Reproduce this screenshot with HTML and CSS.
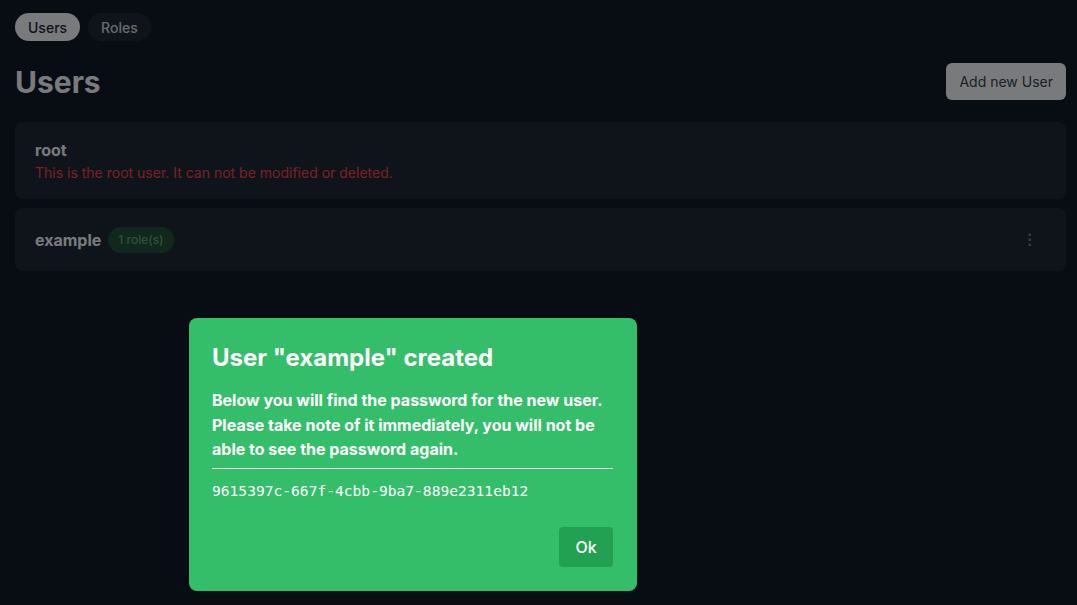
FILE: index.html
```html
<!DOCTYPE html>
<html lang="en">

<head>
    <meta charset="UTF-8">
    <meta name="viewport" content="width=device-width, initial-scale=1.0">
    <title>Users</title>
    <link rel="stylesheet" href="styles.css">
</head>

<body>
    <div class="page">
        <nav class="tabs">
            <a class="tab active" href="#">Users</a>
            <a class="tab" href="#">Roles</a>
        </nav>

        <header class="header">
            <h1>Users</h1>
            <button class="btn">Add new User</button>
        </header>

        <div class="user-list">
            <div class="user-card root">
                <div class="user-name">root</div>
                <div class="user-note">This is the root user. It can not be modified or deleted.</div>
            </div>

            <div class="user-card">
                <div class="user-row">
                    <span class="user-name">example</span>
                    <span class="badge">1 role(s)</span>
                </div>
                <button class="menu" aria-label="More">
                    <svg width="4" height="14" viewBox="0 0 4 14">
                        <rect x="0.5" y="0.5" width="2.5" height="2.5" fill="currentColor" />
                        <rect x="0.5" y="5.5" width="2.5" height="2.5" fill="currentColor" />
                        <rect x="0.5" y="10.5" width="2.5" height="2.5" fill="currentColor" />
                    </svg>
                </button>
            </div>
        </div>
    </div>

    <!-- Modal shown once a user was created -->
    <div class="backdrop"></div>
    <div class="modal">
        <h2>User "example" created</h2>
        <p>Below you will find the password for the new user. Please take note of it immediately, you will not be
            able to see the password again.</p>
        <hr>
        <code class="password">9615397c-667f-4cbb-9ba7-889e2311eb12</code>
        <div class="modal-actions">
            <button class="btn-ok">Ok</button>
        </div>
    </div>
</body>

</html>
```

FILE: styles.css
```css
* {
    margin: 0;
    padding: 0;
    box-sizing: border-box;
}

body {
    font-family: Inter, 'Noto Sans', Arial, sans-serif;
    background: #111827;
    color: #f3f4f6;
    min-height: 100vh;
}

.page {
    padding: 13px 11px 15px 15px;
}

.tabs {
    display: flex;
    gap: 8px;
}

.tab {
    display: inline-flex;
    align-items: center;
    height: 28px;
    padding: 0 13px;
    border-radius: 14px;
    font-size: 14px;
    font-weight: 500;
    text-decoration: none;
    color: #d1d5db;
    background: #1f2937;
}

.tab.active {
    background: #f3f4f6;
    color: #1f2937;
}

.header {
    display: flex;
    align-items: center;
    justify-content: space-between;
    margin-top: 22px;
    height: 37px;
}

h1 {
    font-size: 30px;
    font-weight: 700;
    color: #f3f4f6;
}

.btn {
    height: 37px;
    padding: 0 13px;
    border: none;
    border-radius: 6px;
    background: #f3f4f6;
    color: #374151;
    font-family: inherit;
    font-size: 14px;
    font-weight: 400;
    cursor: pointer;
}

.user-list {
    margin-top: 22px;
    display: flex;
    flex-direction: column;
    gap: 9px;
}

.user-card {
    background: #1f2937;
    border-radius: 8px;
    padding: 0 20px;
    height: 63px;
    display: flex;
    align-items: center;
    justify-content: space-between;
}

.user-card.root {
    height: 77px;
    flex-direction: column;
    align-items: flex-start;
    justify-content: center;
    gap: 4px;
}

.user-name {
    font-size: 16px;
    font-weight: 700;
    color: #f3f4f6;
}

.user-note {
    font-size: 14px;
    color: #ef4444;
}

.user-row {
    display: flex;
    align-items: center;
    gap: 7px;
}

.badge {
    display: inline-flex;
    align-items: center;
    height: 26px;
    padding: 0 10px;
    border-radius: 13px;
    background: #22503a;
    color: #5aa877;
    font-size: 12px;
    font-weight: 500;
}

.menu {
    background: none;
    border: none;
    color: #6b7280;
    margin-right: 14px;
    display: flex;
}

/* Modal */
.backdrop {
    position: fixed;
    inset: 0;
    background: rgba(0, 0, 0, 0.5);
}

.modal {
    position: fixed;
    left: 189px;
    top: 318px;
    width: 448px;
    height: 273px;
    background: #34be6a;
    border-radius: 8px;
    padding: 24px 24px 24px 23px;
    color: white;
    display: flex;
    flex-direction: column;
}

.modal h2 {
    font-size: 24px;
    font-weight: 700;
    line-height: 32px;
}

.modal p {
    margin-top: 14px;
    font-size: 16px;
    font-weight: 700;
    line-height: 24.5px;
}

.modal hr {
    border: none;
    border-top: 1px solid #e5f7ec;
    margin-top: 6px;
}

.password {
    margin-top: 13px;
    font-family: 'DejaVu Sans Mono', 'Liberation Mono', monospace;
    font-size: 14.6px;
    line-height: 18px;
}

.modal-actions {
    margin-top: auto;
    display: flex;
    justify-content: flex-end;
}

.btn-ok {
    width: 54px;
    height: 40px;
    border: none;
    border-radius: 4px;
    background: #23a152;
    color: white;
    font-family: inherit;
    font-size: 16px;
    font-weight: 500;
    cursor: pointer;
}
```
